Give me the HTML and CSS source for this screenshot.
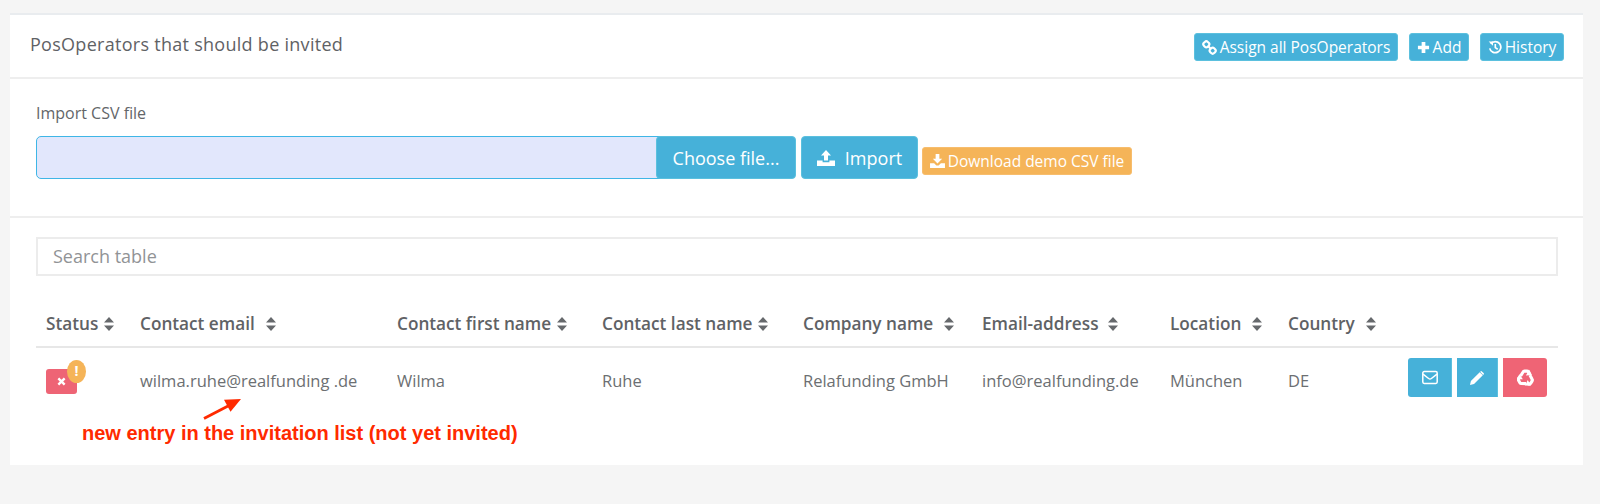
FILE: index.html
```html
<!DOCTYPE html>
<html lang="en">
<head>
<meta charset="utf-8">
<title>PosOperators</title>
<link rel="stylesheet" href="styles.css">
</head>
<body>
<svg class="sprites" width="0" height="0" aria-hidden="true">
  <symbol id="sort" viewBox="0 0 10 14"><path d="M5 0l5 5.600H0zM5 14L0 8.400h10z"/></symbol>
  <symbol id="link" viewBox="0 0 16 16"><g fill="none" stroke="currentColor" stroke-width="2.300"><rect x="1.700" y="1.700" width="5.800" height="5.800" rx="2.200" transform="rotate(45 4.600 4.600)"/><rect x="8.500" y="8.500" width="5.800" height="5.800" rx="2.200" transform="rotate(45 11.400 11.400)"/><path d="M6.500 6.500l3 3"/></g></symbol>
  <symbol id="plus" viewBox="0 0 14 14"><path d="M5 1h4v4h4v4H9v4H5V9H1V5h4z"/></symbol>
  <symbol id="history" viewBox="0 0 16 16"><path d="M3.200 4.200A6.400 6.400 0 1 1 2 9.500" fill="none" stroke="currentColor" stroke-width="2"/><path d="M.8 1.600l5 .1-.1 5z"/><path d="M7.400 4.600h1.900v3.600l2.300 1.600-1 1.500-3.200-2.200z"/></symbol>
  <symbol id="upload" viewBox="0 0 18 16"><path d="M9 0l5 5.400h-3v5.200H7V5.400H4zM0 10.500h5.600v1.700h6.800v-1.700H18V16H0z"/></symbol>
  <symbol id="download" viewBox="0 0 16 15"><path d="M6 0h4v5h3l-5 5.300L3 5h3zM0 9.800h4.400l2.400 2.400h2.400l2.400-2.400H16V15H0z"/></symbol>
  <symbol id="mail" viewBox="0 0 16 14"><g fill="none" stroke="currentColor" stroke-width="1.500"><rect x=".8" y="1" width="14.400" height="12" rx="1.400"/><path d="M1 3.600l5.600 4.400q1.400 1 2.800 0L15 3.600"/></g></symbol>
  <symbol id="pencil" viewBox="0 0 14 14"><path d="M0 14l.9-4L9.700 1.200l3.100 3.100L4 13.100zM10.500.4q.7-.6 1.400 0l1.700 1.700q.6.7 0 1.400l-.4.400-3.100-3.100z"/></symbol>
  <symbol id="recycle" viewBox="0 0 18 18">
    <g id="recycle-arm"><path d="M3.800 7.400L6.400 3.200q.5-.9 1.500-.9h2.600q1 0 1.500.8l.9 1.600" fill="none" stroke="currentColor" stroke-width="3.300"/><path d="M9.400 6.800l6.400-.4-2.800-5.600z"/></g>
    <use href="#recycle-arm" transform="rotate(120 9 9.800)"/>
    <use href="#recycle-arm" transform="rotate(240 9 9.800)"/>
  </symbol>
</svg>

<main class="panel">
  <header class="panel-head">
    <h1 class="panel-title">PosOperators that should be invited</h1>
    <div class="head-actions">
      <a class="btn btn-sm btn-info"><svg class="ic ic-link"><use href="#link"/></svg>Assign all PosOperators</a>
      <a class="btn btn-sm btn-info"><svg class="ic ic-plus"><use href="#plus"/></svg>Add</a>
      <a class="btn btn-sm btn-info"><svg class="ic ic-history"><use href="#history"/></svg>History</a>
    </div>
  </header>

  <section class="import">
    <label class="import-label">Import CSV file</label>
    <div class="import-row">
      <div class="file-field"></div>
      <a class="btn btn-lg btn-info btn-choose">Choose file...</a>
      <a class="btn btn-lg btn-info btn-import"><svg class="ic ic-upload"><use href="#upload"/></svg>Import</a>
      <a class="btn btn-sm btn-warning"><svg class="ic ic-download"><use href="#download"/></svg>Download demo CSV file</a>
    </div>
  </section>

  <section class="list">
    <div class="search">Search table</div>
    <table class="grid">
      <colgroup>
        <col class="c1"><col class="c2"><col class="c3"><col class="c4"><col class="c5"><col class="c6"><col class="c7"><col class="c8"><col class="c9">
      </colgroup>
      <thead>
        <tr>
          <th><span class="th-in">Status<svg class="sort"><use href="#sort"/></svg></span></th>
          <th><span class="th-in">Contact email<svg class="sort sort-lg"><use href="#sort"/></svg></span></th>
          <th><span class="th-in">Contact first name<svg class="sort"><use href="#sort"/></svg></span></th>
          <th><span class="th-in">Contact last name<svg class="sort"><use href="#sort"/></svg></span></th>
          <th><span class="th-in">Company name<svg class="sort sort-lg"><use href="#sort"/></svg></span></th>
          <th><span class="th-in">Email-address<svg class="sort sort-md"><use href="#sort"/></svg></span></th>
          <th><span class="th-in">Location<svg class="sort sort-lg"><use href="#sort"/></svg></span></th>
          <th><span class="th-in">Country<svg class="sort sort-lg"><use href="#sort"/></svg></span></th>
          <th></th>
        </tr>
      </thead>
      <tbody>
        <tr>
          <td>
            <span class="status">
              <span class="status-x">
                <svg class="ic-x" viewBox="0 0 10 10"><path d="M1.500 1.500l7 7M8.500 1.500l-7 7" stroke="currentColor" stroke-width="2.600" fill="none"/></svg>
              </span>
              <span class="status-warn">!</span>
            </span>
          </td>
          <td>wilma.ruhe@realfunding .de</td>
          <td>Wilma</td>
          <td>Ruhe</td>
          <td>Relafunding GmbH</td>
          <td>info@realfunding.de</td>
          <td>München</td>
          <td>DE</td>
          <td>
            <div class="row-actions">
              <a class="act act-mail"><svg class="act-ic"><use href="#mail"/></svg></a>
              <a class="act act-edit"><svg class="act-ic act-ic-s"><use href="#pencil"/></svg></a>
              <a class="act act-del"><svg class="act-ic act-ic-r"><use href="#recycle"/></svg></a>
            </div>
          </td>
        </tr>
      </tbody>
    </table>

    <svg class="note-arrow" viewBox="0 0 40 22"><path d="M1 20.500L26 7.500" stroke="#ff2a00" stroke-width="2.800"/><path d="M38 1L21 1.800l6.500 12z" fill="#ff2a00"/></svg>
    <p class="note">new entry in the invitation list (not yet invited)</p>
  </section>
</main>
</body>
</html>
```
FILE: styles.css
```css
* { box-sizing: border-box; }
html, body { margin: 0; height: 100%; }
body {
  background: #f5f5f5;
  font-family: "Open Sans", "Noto Sans", sans-serif;
  color: #676a6c;
  padding: 13px 17px 0 10px;
  overflow: hidden;
}
.sprites { position: absolute; }
.panel {
  width: 1573px;
  height: 452px;
  background: #fff;
  border-top: 2px solid #e9ecef;
}
.panel-head {
  height: 64px;
  display: flex;
  justify-content: space-between;
  border-bottom: 2px solid #eeeeee;
  padding: 18px 19px 0 20px;
}
.panel-title {
  margin: 0;
  font-size: 18px;
  line-height: 22px;
  font-weight: 500;
  letter-spacing: .28px;
  color: #5f6265;
}
.head-actions { display: flex; gap: 11px; }
.btn {
  display: inline-flex;
  align-items: center;
  justify-content: center;
  color: #fff;
  white-space: nowrap;
  border-radius: 3px;
}
.btn-info { background: #46b1d9; border: 1px solid #5bc0de; }
.btn-warning { background: #f5b458; border: 1px solid #f7bd6d; }
.btn-sm { height: 28px; font-size: 15.500px; }
.head-actions .btn-sm:nth-child(1) { width: 204px; }
.head-actions .btn-sm:nth-child(2) { width: 60px; }
.head-actions .btn-sm:nth-child(3) { width: 84px; }
.btn-lg { height: 43px; font-size: 18px; border-radius: 4px; }
.ic { fill: currentColor; margin-right: 3px; flex: none; }
.ic-link { width: 15px; height: 15px; }
.ic-plus { width: 13px; height: 13px; }
.ic-history { width: 14px; height: 14px; }
.ic-upload { width: 18px; height: 16px; margin-right: 10px; }
.ic-download { width: 15px; height: 14px; }

.import {
  height: 139px;
  border-bottom: 2px solid #eeeeee;
  padding: 24px 26px 0;
}
.import-label {
  display: block;
  font-size: 16px;
  line-height: 20px;
  font-weight: 500;
  color: #636669;
  margin-bottom: 13px;
}
.import-row { display: flex; align-items: center; }
.file-field {
  width: 625px;
  height: 43px;
  background: #e2e7fc;
  border: 1px solid #3fb6e6;
  border-radius: 5px 0 0 5px;
}
.btn-choose { width: 140px; margin-left: -5px; }
.btn-import { width: 117px; margin-left: 5px; }
.btn-warning { width: 210px; margin: 7px 0 0 4px; }

.list { position: relative; padding: 19px 25px 0 26px; }
.search {
  height: 39px;
  border: 2px solid #ececec;
  font-size: 18px;
  line-height: 35px;
  padding-left: 15px;
  color: #919396;
  margin-bottom: 19px;
}
.grid {
  width: 1522px;
  table-layout: fixed;
  border-collapse: collapse;
  font-size: 16.500px;
}
.c1 { width: 94px; } .c2 { width: 257px; } .c3 { width: 205px; }
.c4 { width: 201px; } .c5 { width: 179px; } .c6 { width: 188px; }
.c7 { width: 118px; } .c8 { width: 120px; } .c9 { width: 160px; }
th {
  height: 52px;
  padding: 6px 0 0 10px;
  text-align: left;
  font-size: 17.200px;
  font-weight: 600;
  color: #5f6265;
  border-bottom: 2px solid #e7e7e7;
}
.th-in { display: inline-flex; align-items: center; white-space: nowrap; }
.sort { width: 10px; height: 14px; margin-left: 6px; fill: #66696c; }
.sort-md { margin-left: 9px; }
.sort-lg { margin-left: 11px; }
td { height: 66px; padding: 0 0 0 10px; color: #6c6f72; white-space: nowrap; }
.status { display: block; position: relative; width: 31px; height: 25px; top: 1px; }
.status-x {
  display: flex;
  align-items: center;
  justify-content: center;
  width: 31px;
  height: 25px;
  background: #ee6475;
  border-radius: 3px;
  color: #fff;
}
.ic-x { width: 9px; height: 9px; }
.status-warn {
  position: absolute;
  left: 21px;
  top: -9px;
  width: 19px;
  height: 23px;
  border-radius: 50%;
  background: #f5b458;
  color: #fff;
  font-size: 14px;
  font-weight: 700;
  line-height: 22px;
  text-align: center;
}
.row-actions { display: flex; margin: -6px 0 0 0; gap: 5px; }
.act {
  display: flex;
  align-items: center;
  justify-content: center;
  height: 39px;
  color: #fff;
  background: #46b1d9;
  border-right: 1px solid #5bc0de;
}
.act-mail { width: 44px; border-radius: 3px 0 0 3px; }
.act-edit { width: 41px; }
.act-del { width: 44px; background: #ef6475; border-radius: 0 3px 3px 0; border: 0; }
.act-ic { width: 16px; height: 15px; fill: currentColor; }
.act-ic-s { width: 14px; height: 14px; }
.act-ic-r { width: 17px; height: 17px; }

.note-arrow {
  position: absolute;
  left: 193px;
  top: 180px;
  width: 40px;
  height: 22px;
}
.note {
  position: absolute;
  left: 72px;
  top: 203px;
  margin: 0;
  font-family: "Liberation Sans", Arial, sans-serif;
  font-size: 20px;
  line-height: 24px;
  font-weight: 700;
  color: #ff2a00;
  white-space: nowrap;
}
```
